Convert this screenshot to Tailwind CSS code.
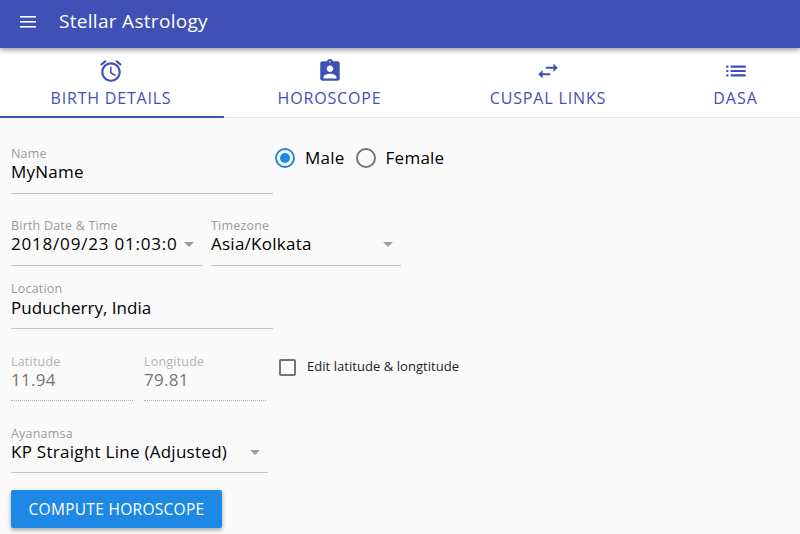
<!DOCTYPE html>
<html lang="en">
<head>
<meta charset="UTF-8">
<script src="https://cdn.jsdelivr.net/npm/@tailwindcss/browser@4"></script>
<title>Stellar Astrology</title>
</head>
<body class="w-[800px] h-[534px] overflow-hidden bg-[#fafafa] font-['Open_Sans',sans-serif] text-black">
  <header class="relative z-10 flex h-[48px] items-center bg-[#3f51b5] pl-[20px] text-white shadow-[0_2px_5px_rgba(0,0,0,0.4)]">
    <svg class="w-[16px] h-[12px] -mt-[4px]" viewBox="0 0 16 12" fill="#fff"><rect y="0" width="16" height="1.6"/><rect y="5" width="16" height="1.6"/><rect y="10" width="16" height="1.6"/></svg>
    <h1 class="ml-[23px] -mt-[6px] text-[19px] tracking-[0.3px]">Stellar Astrology</h1>
  </header>

  <nav class="flex h-[70px] border-b border-[#e4e4e4] bg-white text-[#3f51b5]">
    <div class="relative flex w-[224px] flex-col items-center pr-[2px] pt-[10px]">
      <svg class="w-[26px] h-[26px]" viewBox="0 0 24 24" fill="#3f51b5"><path d="M22 5.72l-4.6-3.86-1.29 1.53 4.6 3.86L22 5.72zM7.88 3.39L6.6 1.86 2 5.71l1.29 1.53 4.59-3.85zM12.5 8H11v6l4.75 2.85.75-1.23-4-2.37V8zM12 4c-4.97 0-9 4.03-9 9s4.03 9 9 9 9-4.03 9-9-4.03-9-9-9zm0 16c-3.87 0-7-3.13-7-7s3.13-7 7-7 7 3.13 7 7-3.13 7-7 7z"/></svg>
      <span class="mt-[2px] text-[16px] leading-[24px] tracking-[0.8px]">BIRTH DETAILS</span>
      <div class="absolute bottom-[-1px] left-0 h-[2px] w-full bg-[#3f51b5]"></div>
    </div>
    <div class="flex w-[213px] flex-col items-center pr-[2px] pt-[10px]">
      <svg class="w-[26px] h-[26px]" viewBox="0 0 24 24" fill="#3f51b5"><path d="M19 3h-4.18C14.4 1.84 13.3 1 12 1s-2.4.84-2.82 2H5c-1.1 0-2 .9-2 2v14c0 1.1.9 2 2 2h14c1.1 0 2-.9 2-2V5c0-1.1-.9-2-2-2zm-7-.25c.41 0 .75.34.75.75s-.34.75-.75.75-.75-.34-.75-.75.34-.75.75-.75zM12 7c1.66 0 3 1.34 3 3s-1.34 3-3 3-3-1.34-3-3 1.34-3 3-3zm6 12H6v-1.4c0-2 4-3.1 6-3.1s6 1.1 6 3.1V19z"/></svg>
      <span class="mt-[2px] text-[16px] leading-[24px] tracking-[0.85px]">HOROSCOPE</span>
    </div>
    <div class="flex w-[222px] flex-col items-center pt-[10px]">
      <svg class="w-[26px] h-[26px]" viewBox="0 0 24 24" fill="#3f51b5"><path d="M6.99 11L3 15l3.99 4v-3H14v-2H6.99v-3zM21 9l-3.99-4v3H10v2h7.01v3L21 9z"/></svg>
      <span class="mt-[2px] text-[16px] leading-[24px] tracking-[0.85px]">CUSPAL LINKS</span>
    </div>
    <div class="flex flex-1 flex-col items-center pl-[12px] pt-[10px]">
      <svg class="w-[26px] h-[26px]" viewBox="0 0 24 24" fill="#3f51b5"><path d="M3 13h2v-2H3v2zm0 4h2v-2H3v2zm0-8h2V7H3v2zm4 4h14v-2H7v2zm0 4h14v-2H7v2zM7 7v2h14V7H7z"/></svg>
      <span class="mt-[2px] text-[16px] leading-[24px] tracking-[1px]">DASA</span>
    </div>
  </nav>

  <main class="flex flex-col px-[11px] pt-[29px]">
    <div class="flex items-start">
      <div class="w-[262px] h-[47px] border-b border-[#c4c4c4]">
        <div class="text-[12.5px] leading-[14px] tracking-[0.2px] text-[#9a9a9a]">Name</div>
        <div class="text-[17px] leading-[22px] tracking-[0.25px]">MyName</div>
      </div>
      <div class="ml-[2px] flex items-center text-[17px] tracking-[0.25px] -mt-[2px]">
        <span class="flex w-[20px] h-[20px] items-center justify-center rounded-full border-2 border-[#1e88e5]"><span class="w-[10px] h-[10px] rounded-full bg-[#1e88e5]"></span></span>
        <span class="ml-[10px]">Male</span>
        <span class="ml-[11px] w-[20px] h-[20px] rounded-full border-2 border-[#757575]"></span>
        <span class="ml-[10px]">Female</span>
      </div>
    </div>

    <div class="mt-[25px] flex gap-[9px]">
      <div class="relative w-[191px] h-[47px] border-b border-[#c4c4c4]">
        <div class="text-[12.5px] leading-[14px] tracking-[0.2px] text-[#9a9a9a]">Birth Date &amp; Time</div>
        <div class="text-[17px] leading-[22px] tracking-[0.8px] whitespace-nowrap">2018/09/23 01:03:0</div>
        <span class="absolute right-[8px] top-[23px] h-0 w-0 border-x-[5px] border-t-[5px] border-x-transparent border-t-[#9e9e9e]"></span>
      </div>
      <div class="relative w-[190px] h-[47px] border-b border-[#c4c4c4]">
        <div class="text-[12.5px] leading-[14px] tracking-[0.2px] text-[#9a9a9a]">Timezone</div>
        <div class="text-[17px] leading-[22px] tracking-[0.25px]">Asia/Kolkata</div>
        <span class="absolute right-[8px] top-[23px] h-0 w-0 border-x-[5px] border-t-[5px] border-x-transparent border-t-[#9e9e9e]"></span>
      </div>
    </div>

    <div class="mt-[16px] w-[262px] h-[47px] border-b border-[#c4c4c4]">
      <div class="text-[12.5px] leading-[14px] tracking-[0.2px] text-[#9a9a9a]">Location</div>
      <div class="text-[17px] leading-[22px] mt-[1px]">Puducherry, India</div>
    </div>

    <div class="mt-[25px] flex items-start">
      <div class="w-[122px] h-[47px] border-b border-dotted border-[#b5b5b5] pt-[1px] text-[#b4b4b4]">
        <div class="text-[12.5px] leading-[14px] tracking-[0.2px]">Latitude</div>
        <div class="text-[17px] leading-[22px] tracking-[0.25px] text-[#757575]">11.94</div>
      </div>
      <div class="ml-[11px] w-[122px] h-[47px] border-b border-dotted border-[#b5b5b5] pt-[1px] text-[#b4b4b4]">
        <div class="text-[12.5px] leading-[14px] tracking-[0.2px]">Longitude</div>
        <div class="text-[17px] leading-[22px] tracking-[0.25px] text-[#757575]">79.81</div>
      </div>
      <div class="ml-[13px] mt-[4px] flex items-center">
        <span class="w-[17px] h-[17px] rounded-[2px] border-2 border-[#757575]"></span>
        <span class="ml-[11px] -mt-[1px] text-[13px] tracking-[0.05px] text-[#222]">Edit latitude &amp; longtitude</span>
      </div>
    </div>

    <div class="relative mt-[25px] w-[257px] h-[47px] border-b border-[#c4c4c4] pt-[1px]">
      <div class="text-[12.5px] leading-[14px] tracking-[0.2px] text-[#9a9a9a]">Ayanamsa</div>
      <div class="text-[17px] leading-[22px] tracking-[0.27px] whitespace-nowrap">KP Straight Line (Adjusted)</div>
      <span class="absolute right-[8px] top-[24px] h-0 w-0 border-x-[5px] border-t-[5px] border-x-transparent border-t-[#9e9e9e]"></span>
    </div>

    <button class="mt-[17px] w-[211px] h-[38px] rounded-[2px] bg-[#1e88e5] pt-[2px] text-[15.5px] tracking-[0.3px] text-white shadow-[0_2px_4px_rgba(0,0,0,0.35)]">COMPUTE HOROSCOPE</button>
  </main>
</body>
</html>
